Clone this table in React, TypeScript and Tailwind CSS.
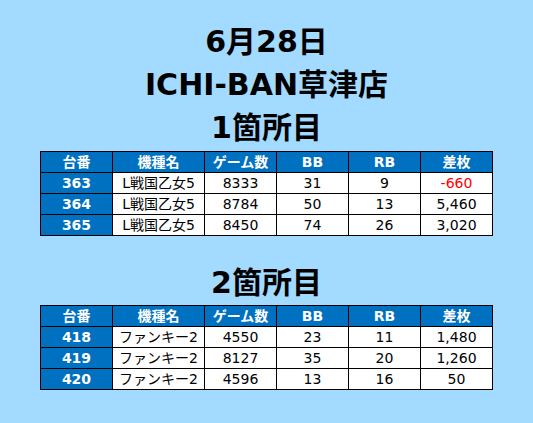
const FONT = { fontFamily: '"DejaVu Sans", "Noto Sans CJK JP", sans-serif' };

type Row = { no: string; name: string; games: string; bb: string; rb: string; diff: string; neg?: boolean };

const table1: Row[] = [
  { no: "363", name: "L戦国乙女5", games: "8333", bb: "31", rb: "9", diff: "-660", neg: true },
  { no: "364", name: "L戦国乙女5", games: "8784", bb: "50", rb: "13", diff: "5,460" },
  { no: "365", name: "L戦国乙女5", games: "8450", bb: "74", rb: "26", diff: "3,020" },
];

const table2: Row[] = [
  { no: "418", name: "ファンキー2", games: "4550", bb: "23", rb: "11", diff: "1,480" },
  { no: "419", name: "ファンキー2", games: "8127", bb: "35", rb: "20", diff: "1,260" },
  { no: "420", name: "ファンキー2", games: "4596", bb: "13", rb: "16", diff: "50" },
];

const heads = ["台番", "機種名", "ゲーム数", "BB", "RB", "差枚"];
const widths = ["w-[72px]", "w-[92px]", "w-[72px]", "w-[72px]", "w-[72px]", "w-[72px]"];

function DataTable({ rows }: { rows: Row[] }) {
  return (
    <table className="mx-auto w-[453px] table-fixed border-collapse text-center text-[14px] leading-none">
      <thead>
        <tr className="h-[21px]">
          {heads.map((h, i) => (
            <th key={h} className={`${widths[i]} border border-black bg-[#0070c0] p-0 font-bold text-white`}>
              {h}
            </th>
          ))}
        </tr>
      </thead>
      <tbody>
        {rows.map((r) => (
          <tr key={r.no} className="h-[21px]">
            <td className="border border-black bg-[#0070c0] p-0 font-bold text-white">{r.no}</td>
            <td className="border border-black bg-white p-0 text-black">{r.name}</td>
            <td className="border border-black bg-white p-0 text-black">{r.games}</td>
            <td className="border border-black bg-white p-0 text-black">{r.bb}</td>
            <td className="border border-black bg-white p-0 text-black">{r.rb}</td>
            <td className={`border border-black bg-white p-0 ${r.neg ? "text-[#ff0000]" : "text-black"}`}>{r.diff}</td>
          </tr>
        ))}
      </tbody>
    </table>
  );
}

export default function App() {
  return (
    <div className="h-[423px] w-[533px] overflow-hidden bg-[#a3daff] pt-[20px]" style={FONT}>
      <div className="text-center text-[30px] font-bold leading-[43px] text-black">
        <div>6月28日</div>
        <div>ICHI-BAN草津店</div>
        <div>1箇所目</div>
      </div>
      <div className="mt-[2px]">
        <DataTable rows={table1} />
      </div>
      <div className="mt-[25px] text-center text-[30px] font-bold leading-[43px] text-black">2箇所目</div>
      <div className="mt-[1px]">
        <DataTable rows={table2} />
      </div>
    </div>
  );
}
